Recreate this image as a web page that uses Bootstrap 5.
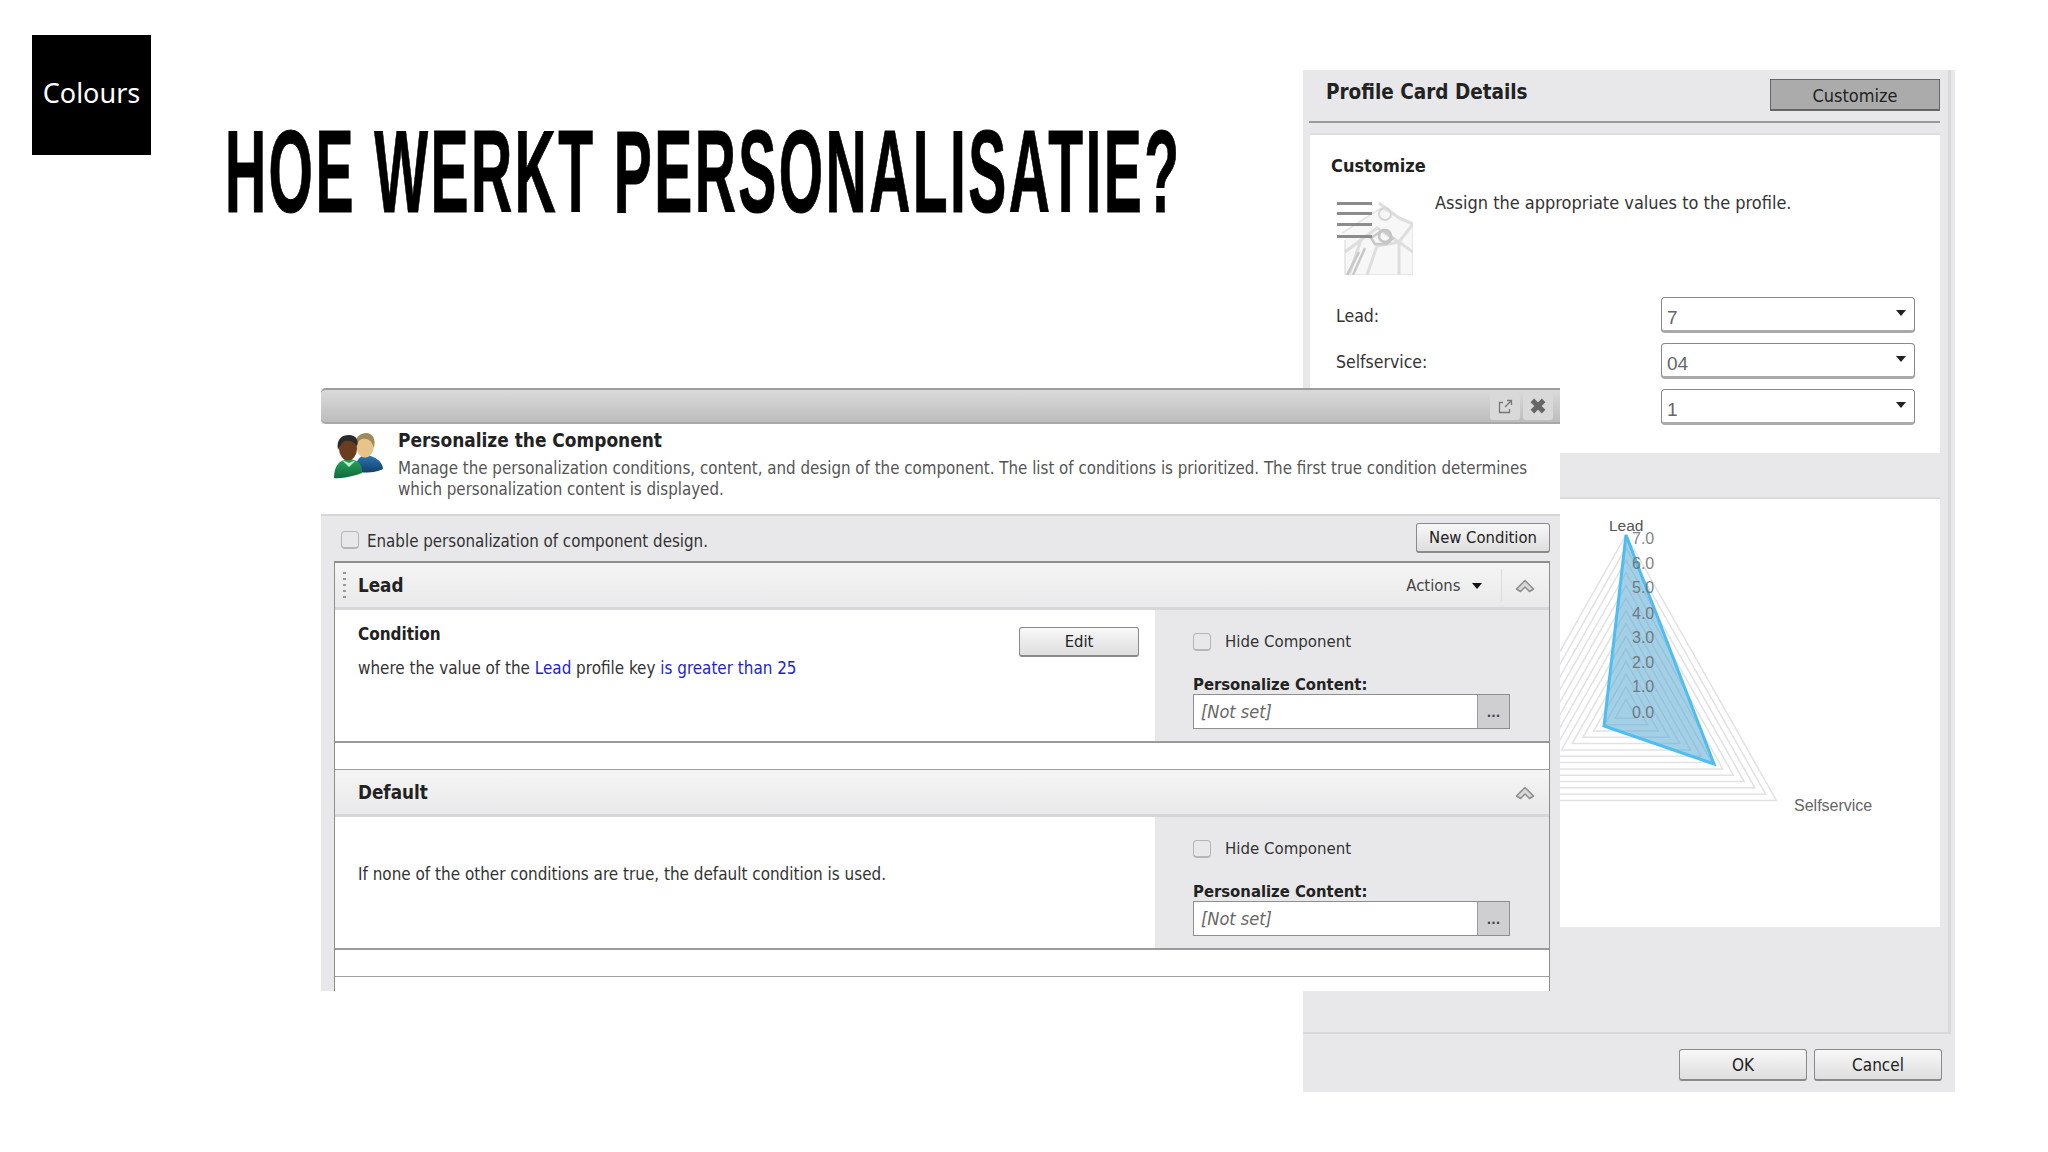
<!DOCTYPE html>
<html lang="nl">
<head>
<meta charset="utf-8">
<title>Hoe werkt personalisatie?</title>
<link rel="stylesheet" href="https://cdn.jsdelivr.net/npm/bootstrap@5.3.0/dist/css/bootstrap.min.css">
<style>
html,body{margin:0;height:100%;overflow:hidden;background:#fff}
body{font-family:"DejaVu Sans",sans-serif;font-stretch:condensed;font-size:16.8px;color:#222;position:relative;width:2048px;height:1152px}
.slide-top{padding:35px 0 0 32px}
.brand-box{width:119px;height:120px;padding-bottom:5px;background:#000;color:#fff;font-family:"Noto Sans",sans-serif;font-stretch:normal;font-size:27px;line-height:1}
.slide-title{margin:93px 0 0 74px;width:956px;height:90px;line-height:0}
.slide-title text{font-family:"Liberation Sans",sans-serif;font-weight:700;font-size:116px;letter-spacing:4.9px;fill:#000;stroke:#000;stroke-width:1px}
.slide-title svg{display:block;overflow:visible}
.win-profile{position:absolute;left:1303px;top:70px;width:652px;height:1022px;background:#e8e8ea}
.pf-main{height:964px;margin-right:4px;border-right:3px solid #d9d9db;border-bottom:2px solid #d9d9db;padding:0 8px 0 7px}
.pf-head{height:53px;border-bottom:2px solid #9a9a9a;margin-left:-1px;padding:9px 0 0 17px}
.pf-title{font-weight:700;font-size:20.5px;color:#222;margin-top:-2px}
.btn.pf-cust{width:170px;height:32px;padding:3px 0 0;background:#ababab;border:1px solid #666;border-bottom-width:2px;border-radius:0;color:#222;font-size:18px;font-stretch:condensed;line-height:1}
.pf-card{height:320px;margin-top:10px;background:#fff;border-top:2px solid #dedede;padding:20px 25px 0 21px}
.pf-h{font-weight:700;font-size:18px;line-height:22px}
.pf-intro{margin:25px 0 22px 6px;height:73px}
.pf-intro p{margin:0 0 0 22px;font-size:18px;line-height:20px;color:#333;position:relative;top:-9px}
.pf-row{height:36px;margin:0 0 10px 5px;font-size:17.5px;color:#333}
.pf-row>span{padding-top:2px}
.sel-box{width:254px;height:36px;background:#fff;border:1.5px solid #888;border-bottom:3px solid #aaa;border-radius:4px;padding:8px 8px 0 5px;font-size:19px;color:#666;font-family:"Liberation Sans",sans-serif}
.tri{width:0;height:0;border-left:5.5px solid transparent;border-right:5.5px solid transparent;border-top:6.5px solid #222}
.sel-box .tri{margin-top:-11px}
.pf-band{height:46px;border-bottom:2px solid #dcdcdc}
.pf-chart{height:428px;background:#fff}
.pf-chart svg{display:block}
.pf-foot{height:58px;padding:15px 13px 0 0;gap:7px}
.btn.std-btn{background:linear-gradient(#f8f8f8,#dedede);border:1px solid #8a8a8a;border-bottom-width:2px;border-radius:3px;padding:0;color:#222;font-size:16.5px;font-stretch:condensed;line-height:1}
.btn.foot-btn{width:128px;height:32px;font-size:17px;padding-top:2px}
.win-dialog{position:absolute;left:321px;top:388px;width:1239px;height:603px;overflow:hidden;background:#e8e8ea}
.dlg-bar{height:36px;background:linear-gradient(#dadada,#bdbdbd);border-top:2px solid #9c9c9c;border-bottom:2px solid #a8a8a8;border-radius:5px 0 0 5px;padding-right:7px;gap:3px}
.bar-btn{width:30px;height:28px;background:#d9d9d9;border-radius:3px}
.dlg-head{height:90px;background:#fff;padding:4px 0 0 13px}
.dlg-head svg{margin-top:5px;flex:none}
.dlg-tx{margin-left:14px}
.dlg-name{font-weight:700;font-size:18.9px;line-height:24px;color:#222}
.dlg-desc{margin:6px 0 0;font-size:16.8px;line-height:21px;color:#555;width:1160px}
.dlg-body{border-top:2px solid #d6d6d6;padding:0 10px 0 13px}
.dlg-tools{height:45px;padding:7px 0 0 7px}
.en-row{margin-top:3px}
.en-row label{margin-left:8px;padding-top:3px;color:#333}
.form-check-input.chk{width:18px;height:18px;margin:0;background-color:#e8e8ea;border:1.5px solid #b5b5b5;border-bottom-width:2.5px;border-radius:4px;flex:none}
.btn.new-btn{width:134px;height:30px;padding-top:2px}
.cond-box{border:solid #8e8e8e;border-width:2px 1.5px 0;background:#fff;height:500px}
.cond-head{height:47px;background:linear-gradient(#f5f5f5,#e9e9eb);border-bottom:3px solid #d6d6d8;padding:0 14px 0 8px}
.grip{width:3px;height:26px;margin-right:12px;background:repeating-linear-gradient(#999 0 2px,transparent 2px 6px)}
.cond-name{font-weight:700;font-size:18.7px;color:#222;padding-top:2px}
.acts{color:#444;font-size:16.5px;padding-top:2px}
.acts .tri{margin-left:11px;margin-right:19px;border-top-color:#111}
.vsep{width:1.5px;height:32px;background:#dcdcdc;margin-right:13px}
.cond-main{height:133px;border-bottom:2px solid #9a9a9a}
.cond-left{width:820px;padding:13px 16px 0 23px;color:#222}
.cond-left.is-plain{padding-top:0}
.cond-right{width:394px;background:#e8e8ea;padding:23px 0 0 38px}
.hide-row{height:18px;color:#333;font-size:16.7px}
.hide-row label{margin-left:14px}
.pc-label{font-weight:700;font-size:16.5px;line-height:20px;margin-top:24px;color:#222}
.pick{width:317px;height:35px;border:1.5px solid #8e8e8e;background:#fff;margin-top:-1px}
.pick-val{font-style:italic;color:#666;padding-left:7px;font-size:18px}
.pick-btn{width:32px;background:#cfcfd1;border-left:1.5px solid #9a9a9a;font-size:13px;color:#444;font-weight:700;text-align:center;padding-top:8px;line-height:20px}
.cond-title{font-weight:700;font-size:17px;line-height:22px}
.cond-text{font-size:16.9px;line-height:22px;margin:12px 0 0;color:#333}
.cond-text em{font-style:normal;color:#1f1fc8}
.btn.edit-btn{width:120px;height:30px;margin-top:4px;padding-top:2px}
.cond-gap{height:27px;border-bottom:1.5px solid #a0a0a0}
.def-text{font-size:16.95px;color:#333;margin:0 0 16px}
</style>
</head>
<body>

<div class="slide-top d-flex align-items-start">
  <div class="brand-box d-flex align-items-center justify-content-center">Colours</div>
  <h1 class="slide-title"><svg width="956" height="90" viewBox="0 0 956 90"><text transform="scale(.492,1)" x="0" y="84">HOE WERKT PERSONALISATIE?</text></svg></h1>
</div>

<section class="win-profile">
  <div class="pf-main">
    <div class="pf-head d-flex justify-content-between align-items-start">
      <div class="pf-title">Profile Card Details</div>
      <button type="button" class="btn pf-cust">Customize</button>
    </div>
    <div class="pf-card">
      <div class="pf-h">Customize</div>
      <div class="pf-intro d-flex">
        <svg width="76" height="73" viewBox="0 0 76 73" aria-hidden="true">
          <path d="M5 31L44 6 76 22V73H8V38" fill="#f7f7f7" stroke="#e4e4e4" stroke-width="1.5"/>
          <path d="M12 73L24 38 40 26 62 40 76 22M42 1L62 16 76 22M30 73L40 44 62 40V73M62 40L76 50M8 50L24 38" fill="none" stroke="#dedede" stroke-width="3"/>
          <path d="M10 73L22 50M16 73L28 46M34 36L46 28 56 36 50 42 38 42Z" fill="none" stroke="#c8c8c8" stroke-width="2.5"/>
          <circle cx="48" cy="12" r="6" fill="none" stroke="#d6d6d6" stroke-width="2"/>
          <circle cx="48" cy="34" r="6" fill="none" stroke="#c4c4c4" stroke-width="2.5"/>
          <path d="M0 1.5H35M0 11.5H35M0 22.5H35M0 34.5H35" stroke="#8c8c8c" stroke-width="3"/>
        </svg>
        <p>Assign the appropriate values to the profile.</p>
      </div>
      <div class="pf-row d-flex justify-content-between align-items-center"><span>Lead:</span><div class="sel-box d-flex justify-content-between align-items-center"><span>7</span><i class="tri"></i></div></div>
      <div class="pf-row d-flex justify-content-between align-items-center"><span>Selfservice:</span><div class="sel-box d-flex justify-content-between align-items-center"><span>04</span><i class="tri"></i></div></div>
      <div class="pf-row d-flex justify-content-end align-items-center"><div class="sel-box d-flex justify-content-between align-items-center"><span>1</span><i class="tri"></i></div></div>
    </div>
    <div class="pf-band"></div>
    <div class="pf-chart">
      <svg id="radar" width="630" height="428" viewBox="0 0 630 428" font-family="Liberation Sans, sans-serif">
        <g id="rings" fill="none" stroke="#e2e2e2" stroke-width="1.5"></g>
        <polygon points="316,36 404,265 294,227" fill="#57a9d2" fill-opacity=".55" stroke="#4fbdf0" stroke-width="3"/>
        <g font-size="16" fill="#666" opacity=".8">
          <text x="322" y="45">7.0</text><text x="322" y="70">6.0</text><text x="322" y="94">5.0</text><text x="322" y="120">4.0</text>
          <text x="322" y="144">3.0</text><text x="322" y="169">2.0</text><text x="322" y="193">1.0</text><text x="322" y="219">0.0</text>
        </g>
        <text x="299" y="32" font-size="15.5" fill="#555">Lead</text>
        <text x="484" y="312" font-size="16" fill="#666">Selfservice</text>
      </svg>
    </div>
  </div>
  <div class="pf-foot d-flex justify-content-end">
    <button type="button" class="btn std-btn foot-btn">OK</button>
    <button type="button" class="btn std-btn foot-btn">Cancel</button>
  </div>
</section>

<section class="win-dialog">
  <div class="dlg-bar d-flex justify-content-end align-items-center">
    <div class="bar-btn d-flex align-items-center justify-content-center">
      <svg width="15" height="15" viewBox="0 0 15 15" aria-hidden="true"><path d="M5 3.5H1.5V13.500H11.500V10M7 8L13 2M9 1.500H13.500V6" fill="none" stroke="#777" stroke-width="1.300"/></svg>
    </div>
    <div class="bar-btn d-flex align-items-center justify-content-center">
      <svg width="18" height="18" viewBox="0 0 16 16" aria-hidden="true"><path d="M3 3L13 13M13 3L3 13" stroke="#666" stroke-width="4.500"/></svg>
    </div>
  </div>
  <div class="dlg-head d-flex">
    <svg width="50" height="46" viewBox="0 0 50 46" aria-hidden="true">
      <defs>
        <linearGradient id="gBlue" x1="0" y1="0" x2="0" y2="1"><stop offset="0" stop-color="#2d78b4"/><stop offset="1" stop-color="#123f6b"/></linearGradient>
        <linearGradient id="gGreen" x1="0" y1="0" x2="0" y2="1"><stop offset="0" stop-color="#2aa65f"/><stop offset="1" stop-color="#0e6b3a"/></linearGradient>
      </defs>
      <path d="M20 38C22 26 27 22 32 22 41 23 49 29 49 36 44 39 30 41 20 38Z" fill="url(#gBlue)"/>
      <ellipse cx="31" cy="12.500" rx="9" ry="12" fill="#e6c48a"/>
      <path d="M22 14C20 3 27 0 33 0 39 1 42 6 40 15 38 8 34 5 28 6 24 7 24 11 22 14Z" fill="#a08a5a"/>
      <path d="M0 45C0 33 5 27 14 26 23 26 29 31 28 40 20 43 8 46 0 45Z" fill="url(#gGreen)"/>
      <path d="M8 27L15 34 22 27 15 30Z" fill="#c8efd2"/>
      <ellipse cx="14" cy="15.500" rx="9" ry="12" fill="#6a3d20"/>
      <path d="M4 17C2 6 8 2 15 2 22 2 25 7 23 13 20 8 15 7 11 8 8 9 6 13 4 17Z" fill="#2a2a2a"/>
    </svg>
    <div class="dlg-tx">
      <div class="dlg-name">Personalize the Component</div>
      <p class="dlg-desc">Manage the personalization conditions, content, and design of the component. The list of conditions is prioritized. The first true condition determines which personalization content is displayed.</p>
    </div>
  </div>
  <div class="dlg-body">
    <div class="dlg-tools d-flex justify-content-between align-items-start">
      <div class="en-row d-flex align-items-center"><input class="form-check-input chk" type="checkbox" id="c0"><label for="c0">Enable personalization of component design.</label></div>
      <button type="button" class="btn std-btn new-btn">New Condition</button>
    </div>
    <div class="cond-box">
      <div class="cond-head d-flex align-items-center">
        <i class="grip"></i>
        <div class="cond-name flex-grow-1">Lead</div>
        <div class="acts d-flex align-items-center">Actions<i class="tri"></i></div>
        <i class="vsep"></i>
        <svg width="20" height="16" viewBox="0 0 20 16" aria-hidden="true"><path d="M1.500 12L10 3.500 18.500 12 14.500 14.500 10 10 5.500 14.500Z" fill="#d8d8d8" stroke="#8f8f8f" stroke-width="1.600" stroke-linejoin="round"/></svg>
      </div>
      <div class="cond-main d-flex">
        <div class="cond-left d-flex justify-content-between">
          <div>
            <div class="cond-title">Condition</div>
            <p class="cond-text">where the value of the <em>Lead</em> profile key <em>is greater than 25</em></p>
          </div>
          <button type="button" class="btn std-btn edit-btn">Edit</button>
        </div>
        <div class="cond-right">
          <div class="hide-row d-flex align-items-center"><input class="form-check-input chk" type="checkbox" id="c1"><label for="c1">Hide Component</label></div>
          <div class="pc-label">Personalize Content:</div>
          <div class="pick d-flex"><div class="pick-val flex-grow-1 d-flex align-items-center">[Not set]</div><div class="pick-btn">...</div></div>
        </div>
      </div>
      <div class="cond-gap"></div>
      <div class="cond-head d-flex align-items-center">
        <i class="grip invisible"></i>
        <div class="cond-name flex-grow-1">Default</div>
        <svg width="20" height="16" viewBox="0 0 20 16" aria-hidden="true"><path d="M1.500 12L10 3.500 18.500 12 14.500 14.500 10 10 5.500 14.500Z" fill="#d8d8d8" stroke="#8f8f8f" stroke-width="1.600" stroke-linejoin="round"/></svg>
      </div>
      <div class="cond-main d-flex">
        <div class="cond-left is-plain d-flex align-items-center"><p class="def-text">If none of the other conditions are true, the default condition is used.</p></div>
        <div class="cond-right">
          <div class="hide-row d-flex align-items-center"><input class="form-check-input chk" type="checkbox" id="c2"><label for="c2">Hide Component</label></div>
          <div class="pc-label">Personalize Content:</div>
          <div class="pick d-flex"><div class="pick-val flex-grow-1 d-flex align-items-center">[Not set]</div><div class="pick-btn">...</div></div>
        </div>
      </div>
      <div class="cond-gap"></div>
    </div>
  </div>
</section>

<script src="https://cdn.jsdelivr.net/npm/bootstrap@5.3.0/dist/js/bootstrap.bundle.min.js"></script>
<script>
(function(){
  var g=document.getElementById('rings'),cx=316,cy=213,step=177/14,out='';
  for(var i=1;i<=14;i++){
    var r=i*step;
    out+='<polygon points="'+cx+','+(cy-r)+' '+(cx+.85*r)+','+(cy+.5*r)+' '+(cx-.85*r)+','+(cy+.5*r)+'"/>';
  }
  g.innerHTML=out;
})();
</script>
</body>
</html>
